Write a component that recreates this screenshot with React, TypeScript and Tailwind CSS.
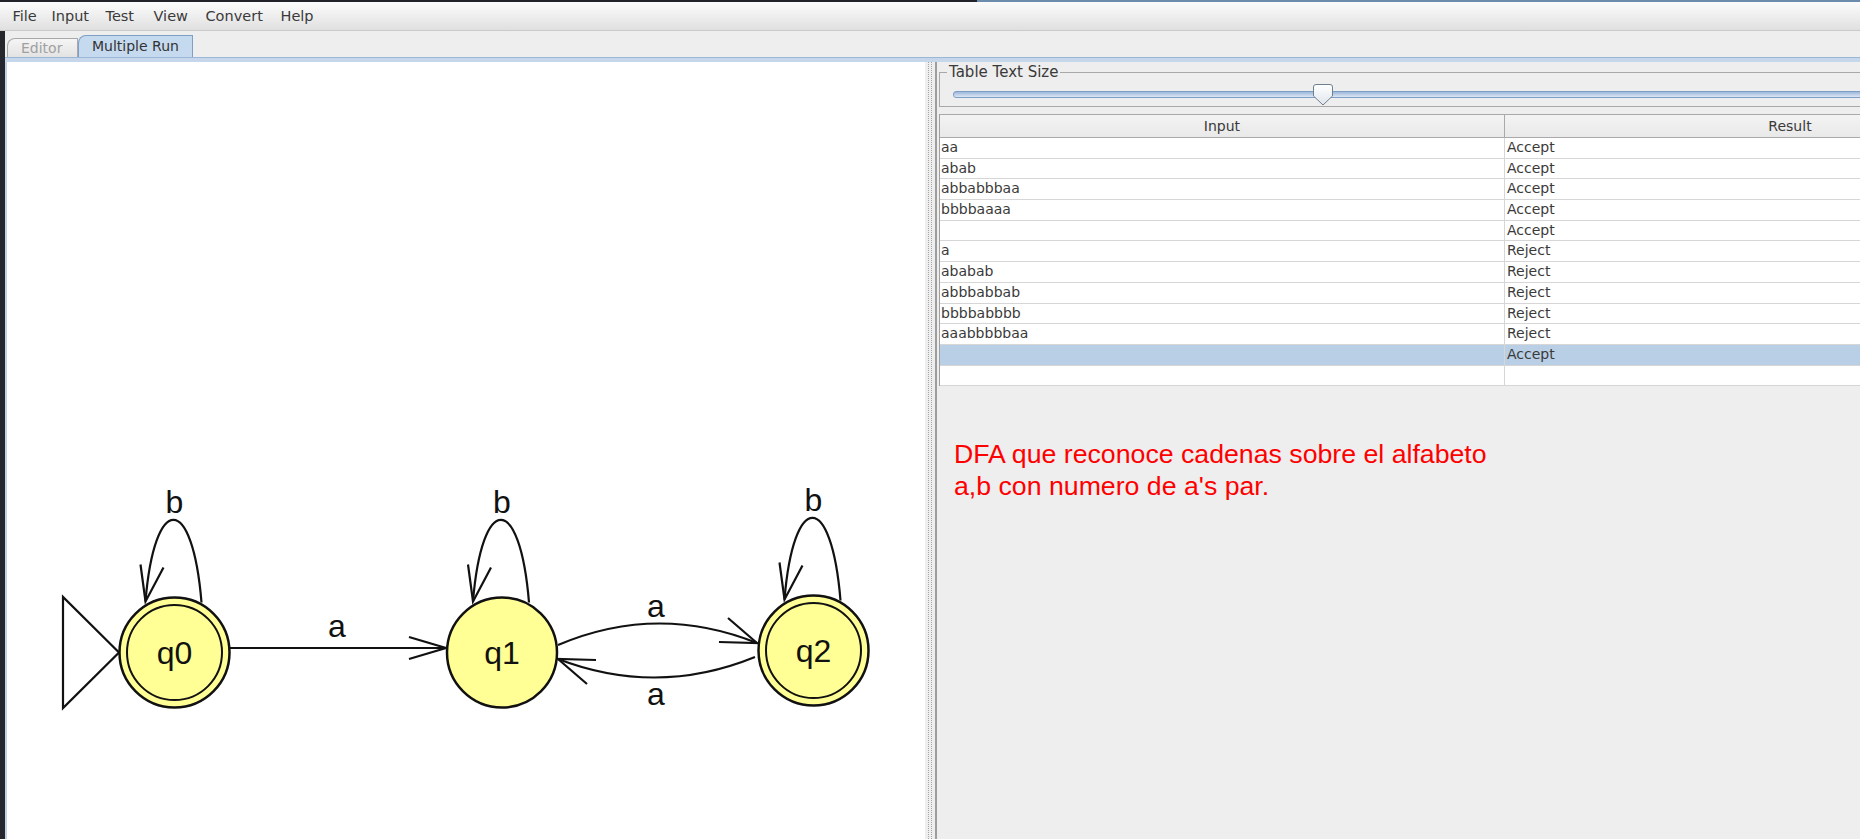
import React from "react";

const menus = [
  { label: "File", w: "w-[39px]" },
  { label: "Input", w: "w-[54px]" },
  { label: "Test", w: "w-[48px]" },
  { label: "View", w: "w-[52px]" },
  { label: "Convert", w: "w-[75px]" },
  { label: "Help", w: "w-[50px]" },
];

const rows: { input: string; result: string; selected?: boolean }[] = [
  { input: "aa", result: "Accept" },
  { input: "abab", result: "Accept" },
  { input: "abbabbbaa", result: "Accept" },
  { input: "bbbbaaaa", result: "Accept" },
  { input: "", result: "Accept" },
  { input: "a", result: "Reject" },
  { input: "ababab", result: "Reject" },
  { input: "abbbabbab", result: "Reject" },
  { input: "bbbbabbbb", result: "Reject" },
  { input: "aaabbbbbaa", result: "Reject" },
  { input: "", result: "Accept", selected: true },
  { input: "", result: "" },
];

// self loop drawn above a state, arrow lands on the left side
function Loop({ cx, cy }: { cx: number; cy: number }) {
  return (
    <g>
      <path
        d={`M ${cx + 27} ${cy - 50} C ${cx + 18} ${cy - 160} ${cx - 20} ${cy - 160} ${cx - 29} ${cy - 51}`}
        fill="none"
        stroke="#111"
        strokeWidth={2.2}
      />
      <polyline
        points={`${cx - 34},${cy - 88} ${cx - 29},${cy - 51} ${cx - 11},${cy - 85}`}
        fill="none"
        stroke="#111"
        strokeWidth={2.2}
      />
      <text x={cx} y={cy - 140} textAnchor="middle" fontSize={32} fill="#111">
        b
      </text>
    </g>
  );
}

function State({ cx, cy, label, final }: { cx: number; cy: number; label: string; final?: boolean }) {
  return (
    <g>
      <circle cx={cx} cy={cy} r={55} fill="#ffff96" stroke="#111" strokeWidth={2.5} />
      {final && <circle cx={cx} cy={cy} r={47.5} fill="none" stroke="#111" strokeWidth={2} />}
      <text x={cx} y={cy + 11.5} textAnchor="middle" fontSize={32} fill="#111">
        {label}
      </text>
    </g>
  );
}

function Diagram() {
  return (
    <svg
      width={918}
      height={777}
      viewBox="7 62 918 777"
      className="block font-['Liberation_Sans',Arial,sans-serif]"
    >
      {/* start arrow */}
      <polygon points="63,597 63,708 119,652.5" fill="#fff" stroke="#111" strokeWidth={2.2} />

      {/* q0 -> q1 */}
      <line x1={230} y1={648} x2={446} y2={648} stroke="#111" strokeWidth={2.2} />
      <polyline points="409,637 446,648 409,659" fill="none" stroke="#111" strokeWidth={2.2} />
      <text x={337} y={637} textAnchor="middle" fontSize={32} fill="#111">
        a
      </text>

      {/* q1 -> q2 */}
      <path d="M 558 645 Q 657 603 757 643" fill="none" stroke="#111" strokeWidth={2.2} />
      <polyline points="728,618 757,643 719,642" fill="none" stroke="#111" strokeWidth={2.2} />
      <text x={656} y={617} textAnchor="middle" fontSize={32} fill="#111">
        a
      </text>

      {/* q2 -> q1 */}
      <path d="M 755 657 Q 657 697 558 659" fill="none" stroke="#111" strokeWidth={2.2} />
      <polyline points="596,660 558,659 587,684" fill="none" stroke="#111" strokeWidth={2.2} />
      <text x={656} y={705} textAnchor="middle" fontSize={32} fill="#111">
        a
      </text>

      <Loop cx={174.5} cy={652.5} />
      <Loop cx={502} cy={652.5} />
      <Loop cx={813.5} cy={650.5} />

      <State cx={174.5} cy={652.5} label="q0" final />
      <State cx={502} cy={652.5} label="q1" />
      <State cx={813.5} cy={650.5} label="q2" final />
    </svg>
  );
}

function SliderThumb() {
  return (
    <svg width={20} height={22} viewBox="0 0 20 22" className="block">
      <defs>
        <linearGradient id="thumbFill" x1="0" y1="0" x2="0" y2="1">
          <stop offset="0" stopColor="#ffffff" />
          <stop offset="1" stopColor="#dfe5ec" />
        </linearGradient>
      </defs>
      <path
        d="M 3 0.5 H 17 Q 19.5 0.5 19.5 3 V 12 L 10 21 L 0.5 12 V 3 Q 0.5 0.5 3 0.5 Z"
        fill="url(#thumbFill)"
        stroke="#6f7f90"
        strokeWidth={1}
      />
    </svg>
  );
}

export default function App() {
  return (
    <div className="w-[1860px] h-[839px] overflow-hidden bg-[#eeeeee] flex flex-col font-['DejaVu_Sans',sans-serif] text-[14px] text-[#3a3a3a]">
      {/* top window edge */}
      <div className="flex h-[2px] shrink-0">
        <div className="w-[977px] bg-[#22222a]" />
        <div className="flex-1 bg-[#6c8cae]" />
      </div>

      {/* menu bar */}
      <div className="h-[29px] shrink-0 flex items-center pl-[5px] bg-gradient-to-b from-[#fcfcfc] to-[#e0e0e0] border-b border-[#cacaca]">
        {menus.map((m) => (
          <span key={m.label} className={`${m.w} pl-[7.5px] leading-[18px] text-[14.5px]`}>
            {m.label}
          </span>
        ))}
      </div>

      <div className="flex flex-1 min-h-0">
        {/* desktop strip at the left edge */}
        <div className="w-[5px] shrink-0 bg-[#26262d]" />

        <div className="flex-1 min-w-0 flex flex-col">
          {/* tabs */}
          <div className="h-[26px] shrink-0 flex items-end pl-[2px]">
            <div className="h-[19px] w-[71px] flex items-center pl-[13px] border border-b-0 border-[#a9a9a9] rounded-tl-[8px] bg-gradient-to-b from-[#f5f5f5] to-[#e3e3e3] text-[#a0a0a0]">
              Editor
            </div>
            <div className="h-[22px] w-[115px] flex items-center pl-[13px] border border-b-0 border-[#7f9fc6] rounded-tl-[8px] bg-[#c6daef] text-[#333333]">
              Multiple Run
            </div>
          </div>
          <div className="h-[1px] shrink-0 bg-[#9cb6d7]" />
          <div className="h-[4px] shrink-0 bg-[#c6d7eb]" />

          {/* content */}
          <div className="flex flex-1 min-h-0">
            <div className="w-[920px] shrink-0 bg-white border-l-2 border-[#c3d1e2] overflow-hidden">
              <Diagram />
            </div>

            {/* split pane divider */}
            <div className="w-[10px] shrink-0 flex justify-center">
              <div className="w-[4px] border-x border-dotted border-[#a6a6a6]" />
            </div>

            {/* right panel */}
            <div className="w-[1140px] shrink-0 border-l-2 border-[#9d9d9d] flex flex-col">
              {/* Table Text Size */}
              <div className="relative ml-[2px] mt-[10px] h-[35px] border border-[#a8a8a8]">
                <span className="absolute -top-[10px] left-[7px] px-[2px] bg-[#eeeeee] leading-[18px] text-[15px]">
                  Table Text Size
                </span>
                <div className="ml-[13px] mt-[18px] h-[7px] rounded-[3px] border border-[#7f9ec6] bg-gradient-to-b from-[#9db8db] to-[#dce7f4]" />
                <div className="absolute left-[373px] top-[11px]">
                  <SliderThumb />
                </div>
              </div>

              {/* results table */}
              <div className="ml-[2px] mt-[7px] border-l border-[#a0a0a0]">
                <div className="flex h-[24px] border-y border-[#a9a9a9] bg-gradient-to-b from-[#f3f3f3] to-[#e9e9e9]">
                  <div className="w-[565px] flex items-center justify-center border-r border-[#a9a9a9]">Input</div>
                  <div className="w-[570px] flex items-center justify-center">Result</div>
                </div>
                {rows.map((r, i) => (
                  <div
                    key={i}
                    className={`flex h-[20.7px] border-b border-[#d6d6d6] leading-[19px] ${r.selected ? "bg-[#b8cfe5]" : "bg-white"}`}
                  >
                    <div className="w-[565px] pl-[1px] border-r border-[#d6d6d6]">{r.input}</div>
                    <div className="w-[570px] pl-[2px]">{r.result}</div>
                  </div>
                ))}
              </div>

              <div className="pl-[17px] mt-[52px] text-[26.7px] leading-[32px] text-[#ff0000] font-['Liberation_Sans',Arial,sans-serif]">
                <p>DFA que reconoce cadenas sobre el alfabeto</p>
                <p>a,b con numero de a's par.</p>
              </div>
            </div>
          </div>
        </div>
      </div>
    </div>
  );
}
